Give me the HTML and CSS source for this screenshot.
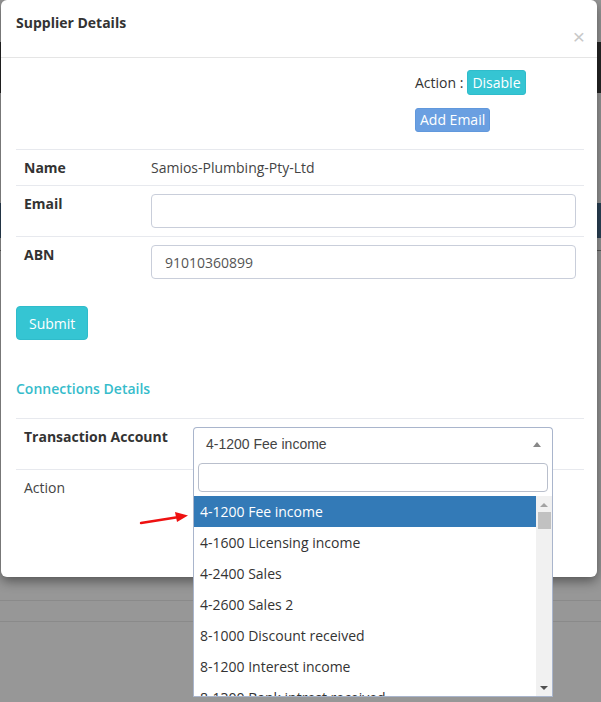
FILE: index.html
```html
<!DOCTYPE html>
<html lang="en">
<head>
    <meta charset="UTF-8">
    <meta name="viewport" content="width=device-width, initial-scale=1.0">
    <title>Supplier Details</title>
    <link rel="stylesheet" href="styles.css">
</head>
<body>
    <!-- Page behind the modal (dimmed) -->
    <div class="page">
        <div class="page-topbar"></div>
        <div class="page-band"></div>
        <div class="page-line first"></div>
        <div class="page-line second"></div>
        <div class="page-line third"></div>
    </div>

    <div class="modal">
        <div class="modal-header">
            <h4 class="modal-title">Supplier Details</h4>
            <span class="close">&times;</span>
        </div>

        <div class="modal-body">
            <div class="actions">
                <div class="action-line">
                    <span>Action :</span>
                    <button class="btn btn-info btn-sm">Disable</button>
                </div>
                <button class="btn btn-primary btn-sm">Add Email</button>
            </div>

            <table class="details">
                <tr>
                    <th>Name</th>
                    <td>Samios-Plumbing-Pty-Ltd</td>
                </tr>
                <tr>
                    <th>Email</th>
                    <td><input type="text" class="form-control"></td>
                </tr>
                <tr>
                    <th>ABN</th>
                    <td><input type="text" class="form-control" value="91010360899"></td>
                </tr>
            </table>

            <button class="btn btn-info btn-submit">Submit</button>

            <h5 class="section-title">Connections Details</h5>

            <table class="details connections">
                <tr>
                    <th>Transaction Account</th>
                    <td>
                        <div class="select2">
                            <div class="select2-selection">
                                <span>4-1200 Fee income</span>
                                <span class="select2-arrow"></span>
                            </div>
                            <div class="select2-dropdown">
                                <div class="select2-search">
                                    <input type="text">
                                </div>
                                <div class="select2-results">
                                    <ul class="select2-options">
                                        <li class="highlighted">4-1200 Fee income</li>
                                        <li>4-1600 Licensing income</li>
                                        <li>4-2400 Sales</li>
                                        <li>4-2600 Sales 2</li>
                                        <li>8-1000 Discount received</li>
                                        <li>8-1200 Interest income</li>
                                        <li>8-1300 Bank intrest received</li>
                                    </ul>
                                    <div class="scrollbar">
                                        <span class="scroll-up"></span>
                                        <span class="scroll-thumb"></span>
                                        <span class="scroll-down"></span>
                                    </div>
                                </div>
                            </div>
                        </div>
                    </td>
                </tr>
                <tr>
                    <td class="plain">Action</td>
                    <td></td>
                </tr>
            </table>
        </div>
    </div>

    <!-- red pointer drawn on the screenshot -->
    <svg class="pointer" width="60" height="20" viewBox="0 0 60 20">
        <path d="M2 15 L40 9" stroke="#ee1111" stroke-width="2.4" stroke-linecap="round" fill="none"/>
        <path d="M36 4 L49 7.5 L38 14 Z" fill="#ee1111"/>
    </svg>
</body>
</html>
```

FILE: styles.css
```css
* {
    box-sizing: border-box;
}

body {
    margin: 0;
    padding: 0;
    font-family: "Open Sans", Arial, sans-serif;
    font-size: 14px;
    color: #333;
    background-color: #979797;
    overflow: hidden;
}

/* dimmed page behind */
.page {
    height: 702px;
}

.page-topbar {
    margin-top: 42px;
    height: 51px;
    background-color: #262626;
}

.page-band {
    margin-top: 110px;
    height: 35px;
    background-color: #2b4257;
}

.page-line {
    height: 1px;
    background-color: #5a5a5a;
}

.page-line.first {
    margin-top: 12px;
}

.page-line.second {
    margin-top: 349px;
    background-color: #8a8a8a;
}

.page-line.third {
    margin-top: 20px;
    background-color: #8a8a8a;
}

/* modal */
.modal {
    position: absolute;
    top: 0;
    left: 1px;
    width: 596px;
    height: 577px;
    background-color: #fff;
    border-radius: 6px;
    box-shadow: 0 4px 12px rgba(0, 0, 0, 0.45);
}

.modal-header {
    height: 58px;
    padding: 13px 15px 0 15px;
    border-bottom: 1px solid #e5e5e5;
    display: flex;
    justify-content: space-between;
    align-items: flex-start;
}

.modal-title {
    margin: 0;
    font-size: 14px;
    font-weight: bold;
    line-height: 20px;
    color: #333;
}

.close {
    margin-top: 14px;
    margin-right: -3px;
    font-size: 21px;
    line-height: 20px;
    font-family: Arial, "Liberation Sans", sans-serif;
    color: #c8c8c8;
}

.modal-body {
    padding: 12px 13px 15px 15px;
}

.actions {
    margin-left: 399px;
    display: flex;
    flex-direction: column;
    align-items: flex-start;
    gap: 13px;
}

.action-line {
    display: flex;
    align-items: center;
    gap: 4px;
}

.btn {
    font-family: "Open Sans", Arial, sans-serif;
    font-size: 14px;
    color: #fff;
    border: 1px solid transparent;
    border-radius: 3px;
    cursor: pointer;
}

.btn-sm {
    padding: 1px 4px;
    line-height: 21px;
}

.btn-info {
    background-color: #35c5d3;
    border-color: #2fbccb;
}

.btn-primary {
    background-color: #6a9fe1;
    border-color: #6198dc;
    padding: 1px 4px;
    line-height: 20px;
}

.details {
    width: 568px;
    margin-top: 17px;
    border-collapse: collapse;
}

.details th,
.details td {
    padding: 8px;
    border-top: 1px solid #e7e9ee;
    text-align: left;
    vertical-align: top;
    line-height: 19px;
    font-size: 14px;
}

.details th {
    width: 127px;
    font-weight: bold;
    color: #333;
}

.details td {
    color: #444;
}

.form-control {
    display: block;
    width: 100%;
    height: 34px;
    padding: 6px 13px;
    font-family: "Open Sans", Arial, sans-serif;
    font-size: 14px;
    color: #555;
    border: 1px solid #c9ceda;
    border-radius: 4px;
    outline: none;
}

.btn-submit {
    margin-top: 19px;
    padding: 6px 12px;
    height: 34px;
    width: 72px;
    border-radius: 4px;
}

.section-title {
    margin: 39px 0 0 0;
    font-size: 14px;
    font-weight: 600;
    line-height: 20px;
    color: #36bccb;
}

.connections {
    margin-top: 19px;
}

.connections th {
    width: 169px;
}

.details td.plain {
    color: #444;
    font-weight: normal;
}

/* select2 style dropdown */
.select2 {
    position: relative;
    width: 360px;
}

.select2-selection {
    height: 34px;
    padding: 0 12px;
    display: flex;
    align-items: center;
    justify-content: space-between;
    border: 1px solid #a9b5cc;
    border-bottom-color: #fff;
    border-radius: 4px 4px 0 0;
    font-family: "Liberation Sans", Arial, sans-serif;
    font-size: 14px;
    color: #444;
}

.select2-arrow {
    width: 0;
    height: 0;
    margin-right: -1px;
    border-left: 4px solid transparent;
    border-right: 4px solid transparent;
    border-bottom: 5px solid #888;
}

.select2-dropdown {
    position: absolute;
    top: 33px;
    left: 0;
    width: 360px;
    background-color: #fff;
    border: 1px solid #a9b5cc;
    border-top: none;
    z-index: 5;
}

.select2-search {
    padding: 3px 4px 4px 4px;
}

.select2-search input {
    display: block;
    width: 100%;
    height: 29px;
    border: 1px solid #b9bfcc;
    border-radius: 4px;
    outline: none;
}

.select2-results {
    display: flex;
    height: 200px;
}

.select2-options {
    flex: 1;
    margin: 0;
    padding: 0;
    list-style: none;
    overflow: hidden;
}

.select2-options li {
    height: 31px;
    padding: 6px 6px;
    line-height: 19px;
    font-size: 14px;
    color: #333;
    white-space: nowrap;
}

.select2-options li.highlighted {
    background-color: #337ab7;
    color: #fff;
}

.scrollbar {
    width: 16px;
    background-color: #f1f1f1;
    display: flex;
    flex-direction: column;
    align-items: center;
}

.scroll-up {
    margin-top: 7px;
    width: 0;
    height: 0;
    border-left: 4px solid transparent;
    border-right: 4px solid transparent;
    border-bottom: 4px solid #a3a3a3;
}

.scroll-thumb {
    margin-top: 5px;
    width: 13px;
    height: 17px;
    background-color: #c1c1c1;
}

.scroll-down {
    margin-top: auto;
    margin-bottom: 6px;
    width: 0;
    height: 0;
    border-left: 4px solid transparent;
    border-right: 4px solid transparent;
    border-top: 4px solid #505050;
}

.pointer {
    position: absolute;
    left: 139px;
    top: 508px;
}
```
